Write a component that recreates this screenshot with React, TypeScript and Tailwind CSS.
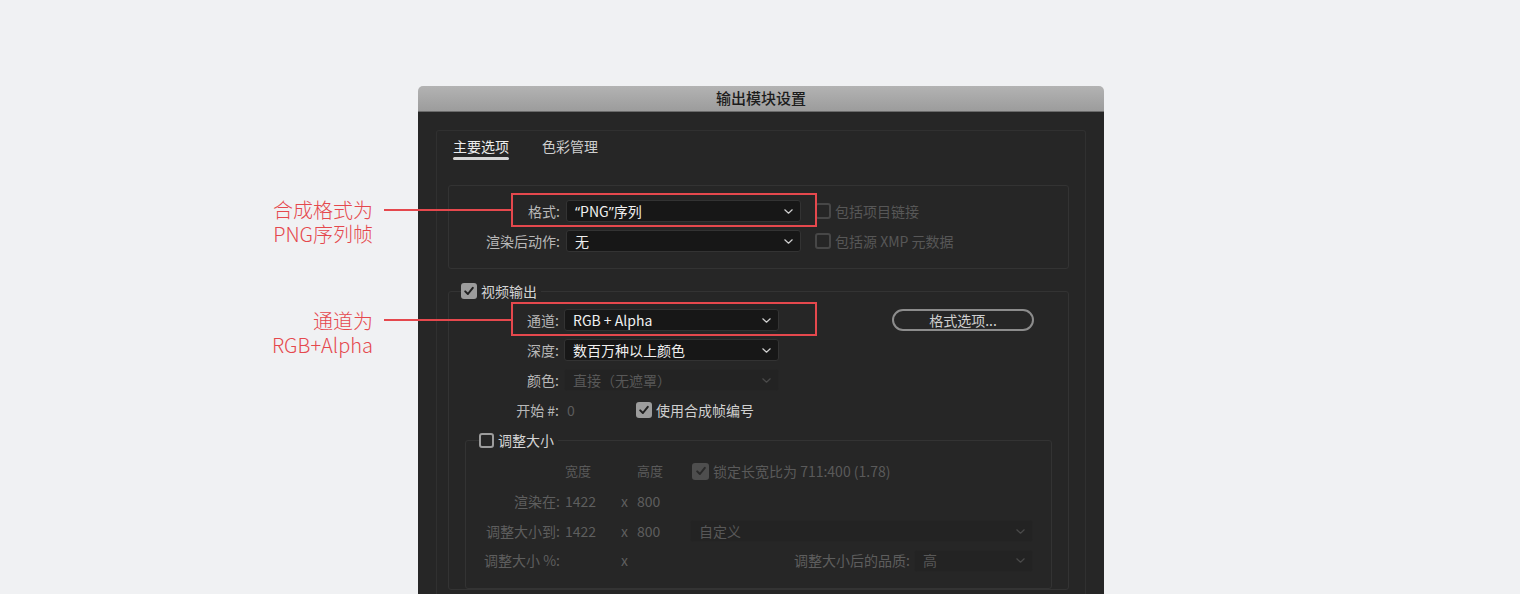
import React from "react";

const FONT = { fontFamily: '"Noto Sans CJK SC", "Noto Sans", sans-serif' };

function Chevron({ dim = false }: { dim?: boolean }) {
  return (
    <svg width="9" height="5" viewBox="0 0 9 5" className="shrink-0">
      <polyline
        points="0.8,0.8 4.5,4.2 8.2,0.8"
        fill="none"
        stroke={dim ? "#4a4a4a" : "#cfcfcf"}
        strokeWidth="1.2"
        strokeLinecap="round"
        strokeLinejoin="round"
      />
    </svg>
  );
}

function Select({
  value,
  className,
  disabled = false,
}: {
  value: React.ReactNode;
  className: string;
  disabled?: boolean;
}) {
  return (
    <div
      className={`flex h-[22px] items-center justify-between rounded-[3px] border pl-[8px] pr-[7px] text-[14px] ${
        disabled
          ? "border-[#252525] bg-[#232323] text-[#585858]"
          : "border-[#333333] bg-[#171717] text-[#f0f0f0]"
      } ${className}`}
    >
      <span className="truncate">{value}</span>
      <Chevron dim={disabled} />
    </div>
  );
}

function Check({ checked, disabled = false, size = "h-[16px] w-[16px]" }: { checked: boolean; disabled?: boolean; size?: string }) {
  if (checked) {
    return (
      <span
        className={`flex shrink-0 items-center justify-center rounded-[3px] ${size} ${
          disabled ? "bg-[#4e4e4e]" : "bg-[#9c9c9c]"
        }`}
      >
        <svg width="12" height="12" viewBox="0 0 12 12">
          <polyline
            points="2.2,6.4 4.9,9 9.8,2.8"
            fill="none"
            stroke={disabled ? "#2a2a2a" : "#202020"}
            strokeWidth="2"
            strokeLinecap="round"
            strokeLinejoin="round"
          />
        </svg>
      </span>
    );
  }
  return (
    <span
      className={`block shrink-0 rounded-[3px] border-2 ${size} ${
        disabled ? "border-[#474747]" : "border-[#9c9c9c]"
      }`}
    />
  );
}

function Annotation({ first, second, className }: { first: string; second: string; className: string }) {
  return (
    <p className={`absolute w-[140px] text-right text-[20px] font-light leading-[24px] text-[#e5484d] ${className}`}>
      {first}
      <br />
      {second}
    </p>
  );
}

const Q = ({ c }: { c: string }) => <span style={{ fontFamily: '"Noto Sans", sans-serif' }}>{c}</span>;

export default function App() {
  return (
    <div className="relative h-[594px] w-[1520px] overflow-hidden bg-[#f0f1f3] pt-[86px]" style={FONT}>
      {/* callouts on the left */}
      <Annotation first="合成格式为" second="PNG序列帧" className="left-[233px] top-[198px]" />
      <Annotation first="通道为" second="RGB+Alpha" className="left-[233px] top-[309px]" />

      <div className="relative ml-[418px] w-[686px]">
        {/* title bar */}
        <div className="flex h-[26px] items-center justify-center rounded-t-[5px] border-b border-[#6a6a6a] bg-gradient-to-b from-[#b3b3b3] to-[#9c9c9c] text-[15px] font-medium text-[#1c1c1c]">
          输出模块设置
        </div>

        {/* body */}
        <div className="h-[482px] bg-[#262626] px-[18px] pt-[18px]">
          <div className="h-full rounded-t-[3px] border border-b-0 border-[#303030] pl-[11px] pr-[16px]">
            {/* tabs */}
            <div className="flex gap-[33px] pl-[5px] pt-[5px] text-[14px]">
              <div className="flex flex-col">
                <span className="leading-[20px] text-[#ececec]">主要选项</span>
                <span className="mt-[1px] h-[3px] w-[56px] rounded-full bg-[#d6d6d6]" />
              </div>
              <span className="leading-[20px] text-[#cfcfcf]">色彩管理</span>
            </div>

            {/* format group */}
            <div className="mt-[25px] h-[84px] rounded-[3px] border border-[#333333] pt-[10px] text-[14px]">
              <div className="relative flex h-[30px] items-center">
                <span className="w-[111px] text-right text-[#b8b8b8]">格式:</span>
                <Select
                  value={
                    <>
                      <Q c={"\u201C"} />PNG<Q c={"\u201D"} />序列
                    </>
                  }
                  className="ml-[6px] w-[235px]"
                />
                <div className="ml-[14px] flex items-center gap-[4px] text-[#575757]">
                  <Check checked={false} disabled />
                  <span>包括项目链接</span>
                </div>
                <div className="pointer-events-none absolute left-[62px] top-[-3px] h-[34px] w-[306px] border-2 border-[#e5484d]" />
              </div>
              <div className="flex h-[30px] items-center">
                <span className="w-[111px] text-right text-[#b8b8b8]">渲染后动作:</span>
                <Select value="无" className="ml-[6px] w-[235px]" />
                <div className="ml-[14px] flex items-center gap-[4px] text-[#575757]">
                  <Check checked={false} disabled />
                  <span>包括源 XMP 元数据</span>
                </div>
              </div>
            </div>

            {/* video output */}
            <fieldset className="mt-[13px] rounded-[3px] border border-[#333333] pr-[16px] text-[14px]">
              <legend className="ml-[12px] flex items-center gap-[4px] pr-[4px] leading-[18px] text-[#d4d4d4]">
                <Check checked />
                <span>视频输出</span>
              </legend>

              <div className="relative mt-[5px] flex h-[30px] items-center">
                <span className="w-[110px] text-right text-[#b8b8b8]">通道:</span>
                <Select value="RGB + Alpha" className="ml-[5px] w-[215px]" />
                <div className="ml-[113px] flex h-[22px] w-[142px] items-center justify-center rounded-full border-2 border-[#8c8c8c] text-[#cfcfcf]">
                  格式选项...
                </div>
                <div className="pointer-events-none absolute left-[62px] top-[-3px] h-[34px] w-[306px] border-2 border-[#e5484d]" />
              </div>
              <div className="flex h-[30px] items-center">
                <span className="w-[110px] text-right text-[#b8b8b8]">深度:</span>
                <Select value="数百万种以上颜色" className="ml-[5px] w-[215px]" />
              </div>
              <div className="flex h-[30px] items-center">
                <span className="w-[110px] text-right text-[#b8b8b8]">颜色:</span>
                <Select value="直接（无遮罩）" disabled className="ml-[5px] w-[215px]" />
              </div>
              <div className="flex h-[30px] items-center">
                <span className="w-[110px] text-right text-[#b8b8b8]">开始 #:</span>
                <span className="ml-[8px] w-[69px] text-[#5c5c5c]">0</span>
                <div className="flex items-center gap-[4px] text-[#d0d0d0]">
                  <Check checked />
                  <span>使用合成帧编号</span>
                </div>
              </div>

              {/* resize */}
              <fieldset className="ml-[16px] mt-[6px] h-[158px] rounded-[3px] border border-[#333333]">
                <legend className="ml-[13px] flex items-center gap-[4px] pr-[4px] leading-[18px] text-[#d4d4d4]">
                  <Check checked={false} size="h-[15px] w-[15px]" />
                  <span>调整大小</span>
                </legend>

                <div className="mt-[7px] flex h-[30px] items-center text-[#5a5a5a]">
                  <span className="ml-[99px] w-[72px] text-[13px]">宽度</span>
                  <span className="w-[55px] text-[13px]">高度</span>
                  <Check checked disabled size="h-[17px] w-[17px]" />
                  <span className="ml-[4px]">锁定长宽比为 711:400 (1.78)</span>
                </div>
                <div className="flex h-[30px] items-center text-[#5e5e5e]">
                  <span className="w-[94px] text-right">渲染在:</span>
                  <span className="ml-[5px] w-[56px]">1422</span>
                  <span className="w-[16px]">x</span>
                  <span>800</span>
                </div>
                <div className="flex h-[30px] items-center text-[#5e5e5e]">
                  <span className="w-[94px] text-right">调整大小到:</span>
                  <span className="ml-[5px] w-[56px]">1422</span>
                  <span className="w-[16px]">x</span>
                  <span className="w-[53px]">800</span>
                  <Select value="自定义" disabled className="w-[343px]" />
                </div>
                <div className="flex h-[29px] items-center text-[#5e5e5e]">
                  <span className="w-[94px] text-right">调整大小 %:</span>
                  <span className="ml-[61px] w-[16px]">x</span>
                  <span className="w-[273px] text-right">调整大小后的品质:</span>
                  <Select value="高" disabled className="ml-[4px] w-[119px]" />
                </div>
              </fieldset>
            </fieldset>
          </div>
        </div>

        {/* callout leader lines */}
        <div className="absolute left-[-34px] top-[123px] h-[2px] w-[127px] bg-[#e5484d]" />
        <div className="absolute left-[-34px] top-[233px] h-[2px] w-[127px] bg-[#e5484d]" />
      </div>
    </div>
  );
}
